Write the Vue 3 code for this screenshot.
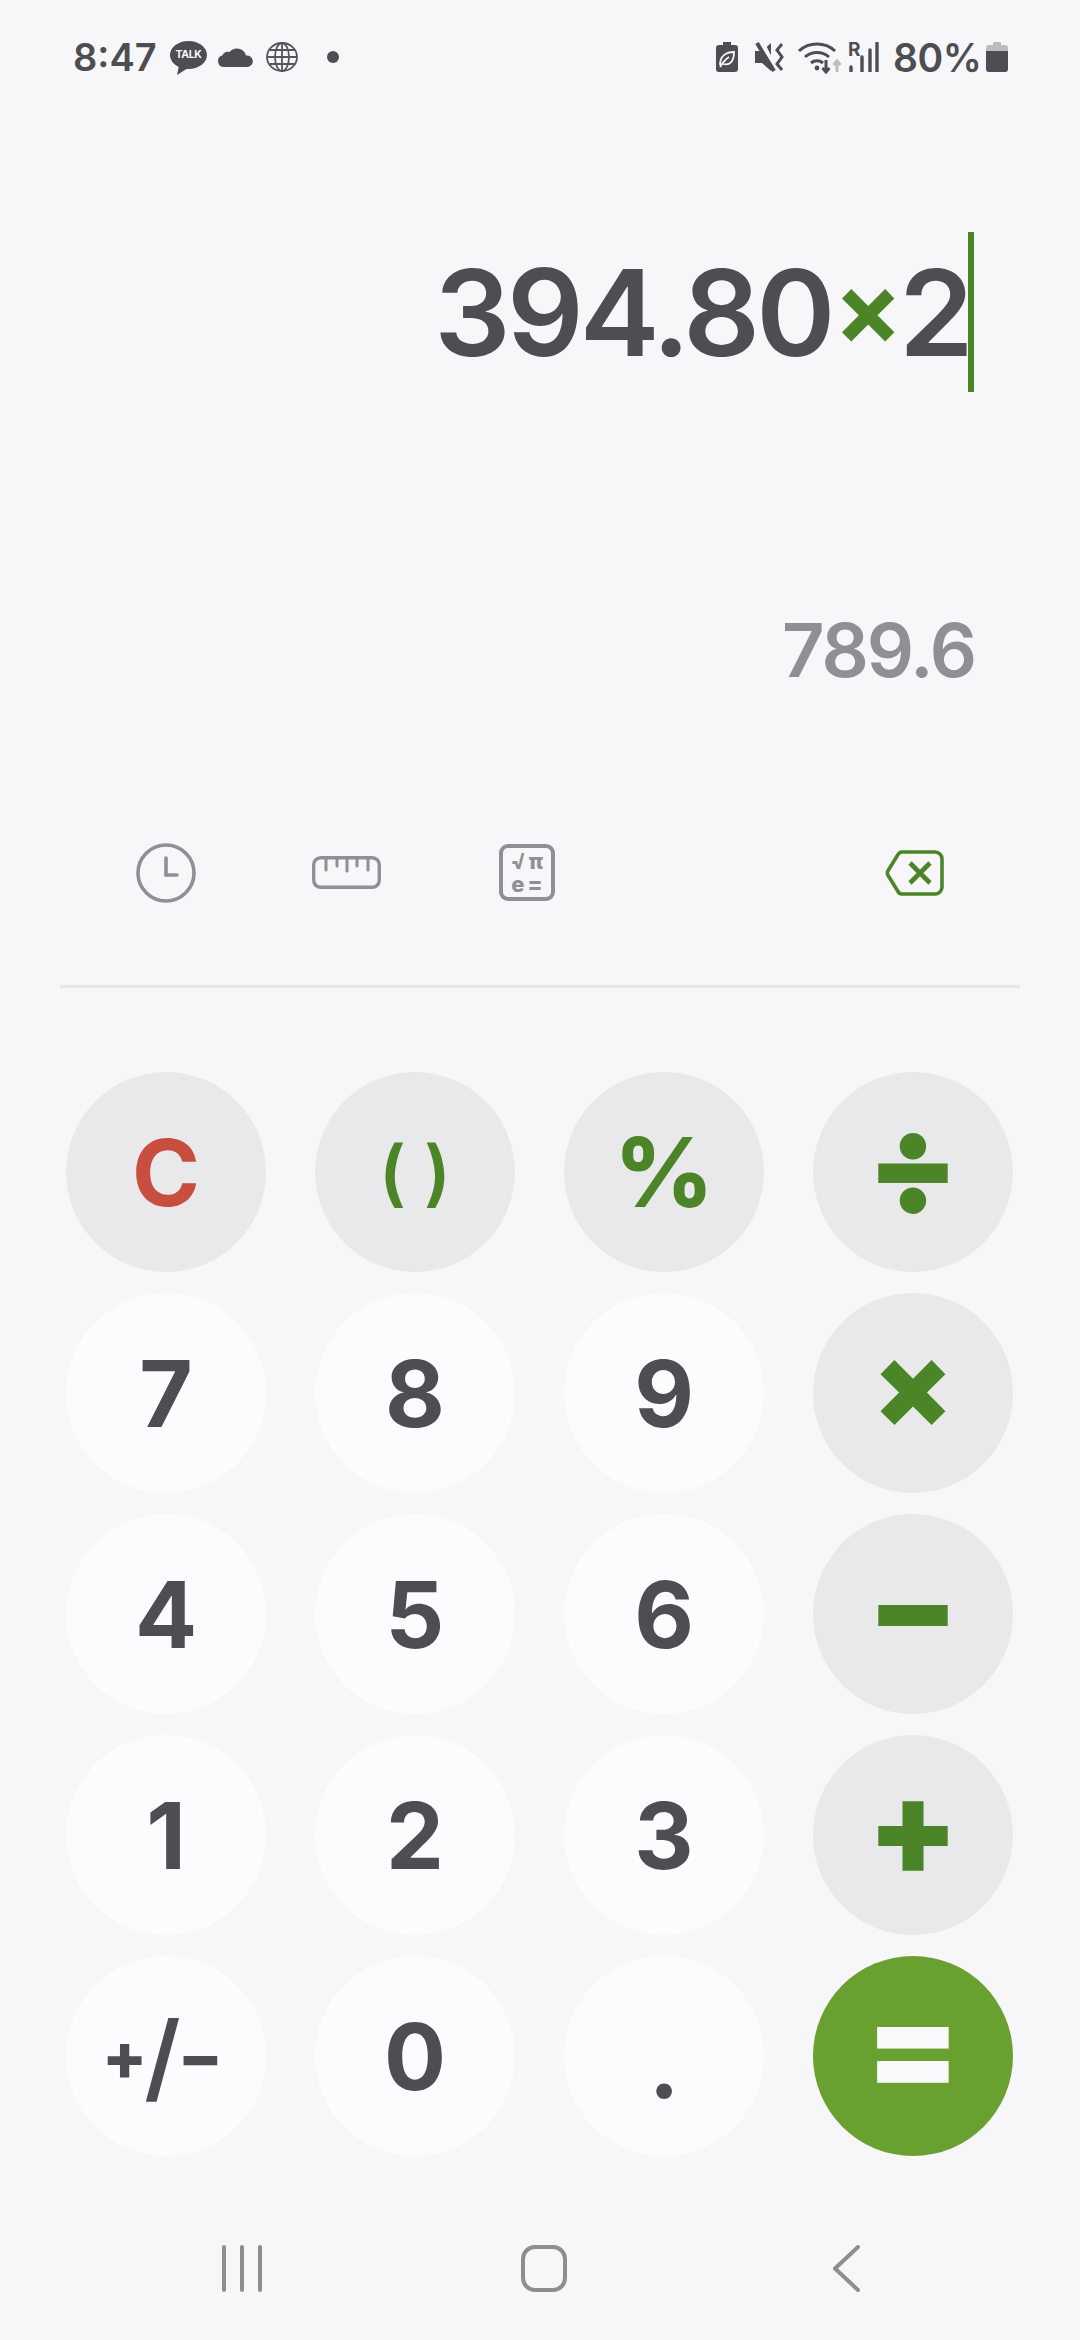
<template>
  <div class="phone">
    <header class="status">
      <span class="clock">8:47</span>
      <span class="talk">
        <svg class="talk-bubble" viewBox="0 0 37 34"><path d="M18.500 0C8.300 0 0 6.300 0 14c0 5 3.500 9.400 8.700 11.900L7 34l9.500-6.100c.7.100 1.300.1 2 .1C28.700 28 37 21.700 37 14S28.700 0 18.500 0z" fill="#4d4d52"/></svg>
        <span class="talk-text">TALK</span>
      </span>
      <svg class="ic cloud" viewBox="0 0 37 20"><path d="M7 20a6 6 0 0 1-1.500-11.800A6 6 0 0 1 12.500 5 9.500 9.500 0 0 1 29 8.500 5.800 5.800 0 0 1 31 20z" fill="#4d4d52"/></svg>
      <svg class="ic globe" viewBox="0 0 32 30" fill="none" stroke="#55555a" stroke-width="1.800">
        <ellipse cx="16" cy="15" rx="15" ry="14" />
        <ellipse cx="16" cy="15" rx="7" ry="14" />
        <path d="M16 1v28M1 15h30M3.500 8h25M3.500 22h25" />
      </svg>
      <span class="dot"></span>
      <span class="spacer"></span>
      <svg class="ic eco" viewBox="0 0 22 30"><path d="M7 0h8v3h4a3 3 0 0 1 3 3v21a3 3 0 0 1-3 3H3a3 3 0 0 1-3-3V6a3 3 0 0 1 3-3h4z" fill="#4d4d52"/><path d="M4 23c0-9 6-13 14-13 0 9-4 14-11 12M4 25c3-5 6-8 9-10" fill="none" stroke="#f7f7f9" stroke-width="1.800"/></svg>
      <svg class="ic mute" viewBox="0 0 30 30"><path d="M0 9h7l9-8v28l-9-8H0z" fill="#4d4d52"/><path d="M6 0l14 28" stroke="#f7f7f9" stroke-width="6"/><path d="M2 1l17 28" stroke="#4d4d52" stroke-width="4"/><path d="M27 2l-5 6 5 7-5 7 5 6" fill="none" stroke="#4d4d52" stroke-width="3"/></svg>
      <svg class="ic wifi" viewBox="0 0 45 34" fill="none" stroke="#4d4d52" stroke-width="3">
        <path d="M1 11a27 27 0 0 1 36 0M7 17a18 18 0 0 1 24 0M13 23a9.500 9.500 0 0 1 12 0" />
        <circle cx="19" cy="28" r="2.400" fill="#4d4d52" stroke="none" />
        <path d="M28 20v12M24.500 28l3.500 4 3.500-4" />
        <path d="M39 32V21M35.500 25l3.500-4 3.500 4" stroke="#bcbcbe" />
      </svg>
      <span class="signal">
        <span class="roam">R</span>
        <svg class="ic bars" viewBox="0 0 31 30"><path d="M3 25v4M14 15v14M22 8v21M29 1v28" stroke="#4d4d52" stroke-width="3.400" stroke-linecap="round"/></svg>
      </span>
      <span class="percent">80%</span>
      <svg class="ic batt" viewBox="0 0 22 30"><path d="M7 0h8v3h4a3 3 0 0 1 3 3v3H0V6a3 3 0 0 1 3-3h4z" fill="#bcbcbe"/><path d="M0 9h22v18a3 3 0 0 1-3 3H3a3 3 0 0 1-3-3z" fill="#4d4d52"/></svg>
    </header>

    <section class="display">
      <div class="expr">
        <span>394.80</span><span class="op">×</span><span>2</span><i class="caret"></i>
      </div>
      <div class="result">789.6</div>
    </section>

    <section class="tools">
      <svg class="clock-ic" viewBox="0 0 60 60" fill="none" stroke="#909094" stroke-width="3.600">
        <circle cx="30" cy="30" r="28" />
        <path d="M30 15v17h11" stroke-linecap="round" />
      </svg>
      <svg class="ruler-ic" viewBox="0 0 69 33" fill="none" stroke="#909094" stroke-width="3.400">
        <rect x="1.700" y="1.700" width="65.600" height="29.600" rx="7" />
        <path d="M14 2v12M25 2v8M35 2v13M45 2v8M56 2v12" stroke-width="3" stroke-linecap="round" />
      </svg>
      <span class="sci-ic">
        <span class="sci-row"><b>√</b><b>π</b></span>
        <span class="sci-row"><b>e</b><b>=</b></span>
      </span>
      <svg class="back-ic" viewBox="0 0 59 46" fill="none" stroke="#4c8527" stroke-width="3.600">
        <path d="M17 2h33a7 7 0 0 1 7 7v28a7 7 0 0 1-7 7H17a5 5 0 0 1-4-2.500L2.800 25a5 5 0 0 1 0-4L13 4.500A5 5 0 0 1 17 2z" />
        <path d="M25 13l20 20M45 13L25 33" stroke-width="4.600" />
      </svg>
    </section>

    <div class="divider"></div>

    <main class="keys">
      <button v-for="k in keys" :key="k.label" class="key" :class="k.cls">
        <span v-if="k.inner === 'sign'" class="sign">+<span class="slash">/</span>−</span>
        <span v-else :class="k.inner">{{ k.label }}</span>
      </button>
    </main>

    <nav class="nav">
      <svg class="nav-recent" viewBox="0 0 42 47" fill="none" stroke="#8e8e8e" stroke-width="4" stroke-linecap="round">
        <path d="M3 2v43M21 2v43M39 2v43" />
      </svg>
      <svg class="nav-home" viewBox="0 0 46 47" fill="none" stroke="#8e8e8e" stroke-width="4">
        <rect x="2" y="2" width="42" height="43" rx="12" />
      </svg>
      <svg class="nav-back" viewBox="0 0 27 47" fill="none" stroke="#8e8e8e" stroke-width="4" stroke-linecap="round" stroke-linejoin="round">
        <path d="M25 2L2 23.500 25 45" />
      </svg>
    </nav>
  </div>
</template>

<script setup>
const keys = [
  { label: 'C', cls: 'fn red' },
  { label: '( )', cls: 'fn green', inner: 'parens' },
  { label: '%', cls: 'fn green', inner: 'pct' },
  { label: '÷', cls: 'fn green', inner: 'sym' },
  { label: '7' },
  { label: '8' },
  { label: '9' },
  { label: '×', cls: 'fn green', inner: 'sym times' },
  { label: '4' },
  { label: '5' },
  { label: '6' },
  { label: '−', cls: 'fn green', inner: 'sym' },
  { label: '1' },
  { label: '2' },
  { label: '3' },
  { label: '+', cls: 'fn green', inner: 'sym' },
  { label: '+/−', inner: 'sign' },
  { label: '0' },
  { label: '.', inner: 'point' },
  { label: '=', cls: 'equals', inner: 'sym eq' }
]
</script>

<style>
html,
body {
  margin: 0;
  background: #f7f7f9;
}
</style>

<style scoped>
.phone {
  width: 1080px;
  height: 2340px;
  display: flex;
  flex-direction: column;
  background: #f7f7f9;
  font-family: Inter, "Liberation Sans", sans-serif;
  color: #4d4d52;
  overflow: hidden;
}

.status {
  height: 114px;
  box-sizing: border-box;
  padding: 0 72px 0 73px;
  display: flex;
  align-items: center;
  flex-shrink: 0;
}

.clock {
  font-size: 38px;
  font-weight: 600;
  width: 97px;
}

.ic {
  display: block;
  flex-shrink: 0;
}

.talk {
  position: relative;
  width: 37px;
  height: 34px;
  margin-top: 2px;
}

.talk-bubble {
  display: block;
  width: 37px;
  height: 34px;
}

.talk-text {
  position: absolute;
  left: 0;
  right: 0;
  top: 7px;
  text-align: center;
  font-size: 10.500px;
  line-height: 13px;
  font-weight: 700;
  color: #f7f7f9;
  letter-spacing: -0.3px;
}

.cloud {
  width: 37px;
  height: 20px;
  margin-left: 10px;
}

.globe {
  width: 32px;
  height: 30px;
  margin-left: 12px;
}

.dot {
  width: 12px;
  height: 12px;
  border-radius: 50%;
  background: #4d4d52;
  margin-left: 29px;
}

.spacer {
  flex: 1;
}

.eco,
.batt {
  width: 22px;
  height: 30px;
}

.mute {
  width: 30px;
  height: 30px;
  margin-left: 17px;
}

.wifi {
  width: 45px;
  height: 34px;
  margin-left: 13px;
}

.signal {
  position: relative;
  width: 31px;
  height: 30px;
  margin-left: 5px;
}

.roam {
  position: absolute;
  left: 0;
  top: -2px;
  font-size: 19px;
  line-height: 20px;
  font-weight: 700;
}

.bars {
  width: 31px;
  height: 30px;
}

.percent {
  font-size: 39px;
  font-weight: 600;
  margin-left: 14px;
  width: 93px;
  letter-spacing: -0.5px;
}

.display {
  height: 706px;
  flex-shrink: 0;
  box-sizing: border-box;
  padding-right: 106px;
  display: flex;
  flex-direction: column;
  align-items: flex-end;
}

.expr {
  height: 160px;
  margin-top: 118px;
  display: flex;
  align-items: center;
  font-size: 120px;
  font-weight: 590;
  letter-spacing: -3.800px;
}

.op {
  color: #4c8527;
  font-size: 102px;
  font-weight: 700;
  margin: -8px 0 0 2px;
}

.caret {
  width: 6px;
  height: 160px;
  margin-left: -2px;
  background: #4c8527;
}

.result {
  margin-top: 208px;
  margin-right: -1px;
  font-size: 74px;
  line-height: 100px;
  font-weight: 600;
  letter-spacing: -2px;
  color: #909094;
}

.tools {
  height: 165px;
  box-sizing: border-box;
  padding: 0 0 60px 136px;
  flex-shrink: 0;
  display: flex;
  align-items: center;
}

.clock-ic {
  width: 60px;
  height: 60px;
}

.ruler-ic {
  width: 69px;
  height: 33px;
  margin-left: 116px;
}

.sci-ic {
  width: 56px;
  height: 57px;
  margin-left: 118px;
  box-sizing: border-box;
  border: 4px solid #909094;
  border-radius: 9px;
  color: #909094;
  display: flex;
  flex-direction: column;
  align-items: center;
  justify-content: center;
  font-size: 22px;
  line-height: 23px;
}

.sci-row {
  display: flex;
  gap: 3px;
}

.sci-ic b {
  font-weight: 800;
}

.back-ic {
  width: 59px;
  height: 46px;
  margin-left: 330px;
}

.divider {
  height: 3px;
  margin: 0 60px;
  background: #e6e6e8;
  flex-shrink: 0;
}

.keys {
  margin-top: 84px;
  padding-left: 66px;
  display: grid;
  grid-template-columns: repeat(4, 200px);
  grid-auto-rows: 200px;
  column-gap: 49px;
  row-gap: 21px;
}

.key {
  width: 200px;
  height: 200px;
  border: 0;
  padding: 0;
  border-radius: 50%;
  background: #fcfcfe;
  color: #4d4d52;
  font-family: inherit;
  font-size: 92px;
  font-weight: 700;
  display: flex;
  align-items: center;
  justify-content: center;
}

.fn {
  background: #e9e9eb;
}

.red {
  color: #c84f3f;
}

.green {
  color: #4c8527;
}

.equals {
  background: #69a131;
  color: #f9f9fb;
}

.sym {
  font-size: 132px;
  line-height: 1;
  font-weight: 900;
  margin-top: -16px;
}

.times {
  font-size: 116px;
}

.eq {
  font-size: 136px;
  margin-top: -20px;
}

.pct {
  font-size: 96px;
  font-weight: 800;
}

.parens {
  font-size: 72px;
  font-weight: 600;
  margin-top: -2px;
}

.point {
  margin-top: 16px;
}

.sign {
  font-size: 66px;
  font-weight: 800;
  margin-left: -7px;
  display: flex;
  align-items: center;
}

.slash {
  font-size: 96px;
  font-weight: 600;
  margin: 0 -3px;
}

.nav {
  margin-top: 89px;
  height: 100px;
  display: flex;
  align-items: flex-start;
  padding-left: 221px;
}

.nav-recent {
  width: 42px;
  height: 47px;
}

.nav-home {
  width: 46px;
  height: 47px;
  margin-left: 258px;
}

.nav-back {
  width: 27px;
  height: 47px;
  margin-left: 266px;
}
</style>
